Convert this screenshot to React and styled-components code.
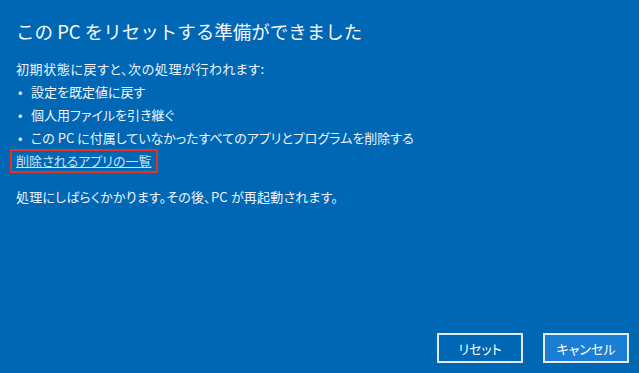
import styled, { createGlobalStyle } from "styled-components"

const GlobalStyle = createGlobalStyle`
    html, body {
        margin: 0;
        padding: 0;
        background: #0067b4;
    }
    body {
        font-family: "Noto Sans CJK JP", "Noto Sans", sans-serif;
        font-feature-settings: "palt";
        color: #ffffff;
    }
`

const items = [
    "設定を既定値に戻す",
    "個人用ファイルを引き継ぐ",
    "この PC に付属していなかったすべてのアプリとプログラムを削除する",
]

export default function App() {
    return (
        <>
            <GlobalStyle />
            <Screen>
                <Title>この PC をリセットする準備ができました</Title>
                <Body>
                    <Line>初期状態に戻すと、次の処理が行われます:</Line>
                    {items.map((text) => (
                        <Bullet key={text}>
                            <Dot>•</Dot>
                            {text}
                        </Bullet>
                    ))}
                    <Highlight>
                        <AppLink href="#">削除されるアプリの一覧</AppLink>
                    </Highlight>
                    <Note>処理にしばらくかかります。その後、PC が再起動されます。</Note>
                </Body>
                <Footer>
                    <Button>リセット</Button>
                    <Button primary>キャンセル</Button>
                </Footer>
            </Screen>
        </>
    )
}

const Screen = styled.main`
    display: flex;
    flex-direction: column;
    box-sizing: border-box;
    height: 373px;
    width: 639px;
    padding: 18px 10px 10px 16px;
    background: #0067b4;
`

const Title = styled.h1`
    margin: 0;
    font-size: 18.5px;
    line-height: 26px;
    font-weight: 400;
    font-feature-settings: normal;
    color: #f4f8fc;
`

const Body = styled.section`
    display: flex;
    flex-direction: column;
    margin-top: 13px;
    font-size: 13px;
    line-height: 23px;
    color: #eef4fa;
`

const Line = styled.div`
    letter-spacing: 0.6px;
`

const Bullet = styled.div`
    display: flex;
`

const Dot = styled.span`
    width: 15px;
    padding-left: 2px;
    box-sizing: border-box;
`

const Highlight = styled.div`
    align-self: flex-start;
    margin-left: -6px;
    padding: 0 4px;
    border: 2px solid #e8331c;
    line-height: 20px;
`

const AppLink = styled.a`
    color: #cfe2f5;
    text-decoration: underline;
`

const Note = styled.p`
    margin: 12px 0 0;
    letter-spacing: 0.2px;
`

const Footer = styled.footer`
    display: flex;
    justify-content: flex-end;
    gap: 20px;
    margin-top: auto;
`

const Button = styled.button`
    width: 86px;
    height: 30px;
    border: 2px solid #e4edf6;
    background: ${(props) => (props.primary ? "#1a7fd4" : "#0067b4")};
    color: #ffffff;
    font-family: "Noto Sans CJK JP", "Noto Sans", sans-serif;
    font-feature-settings: "palt";
    font-size: 13px;
    padding: 0;
`
